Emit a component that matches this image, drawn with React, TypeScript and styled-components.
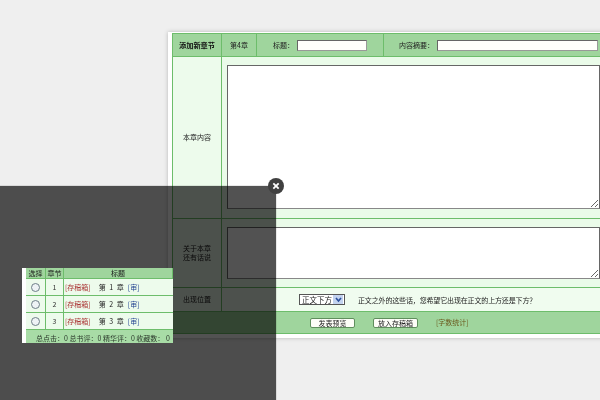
import React from "react";
import styled, { createGlobalStyle } from "styled-components";

const rows = [1, 2, 3];

const App = () => {
  return (
    <Page>
      <GlobalStyle />
      <Panel>
        <HeadRow>
          <HeadTitle>添加新章节</HeadTitle>
          <HeadCell>第4章</HeadCell>
          <HeadField>
            标题：
            <TitleInput />
          </HeadField>
          <HeadField $wide>
            内容摘要：
            <SummaryInput />
          </HeadField>
        </HeadRow>
        <BodyRow>
          <RowLabel>本章内容</RowLabel>
          <AreaCell $top={8} $bottom={9}>
            <MainArea />
          </AreaCell>
        </BodyRow>
        <BodyRow>
          <RowLabel>
            关于本章
            <br />
            还有话说
          </RowLabel>
          <AreaCell $top={8} $bottom={8}>
            <NoteArea />
          </AreaCell>
        </BodyRow>
        <PositionRow>
          <RowLabel>出现位置</RowLabel>
          <PositionCell>
            <SelectBox>
              <span>正文下方</span>
              <SelectArrow>
                <svg width="9" height="9" viewBox="0 0 9 9">
                  <path d="M2 3 L4.5 6 L7 3" fill="none" stroke="#2a4f9c" strokeWidth="1.6" />
                </svg>
              </SelectArrow>
            </SelectBox>
            正文之外的这些话，您希望它出现在正文的上方还是下方？
          </PositionCell>
        </PositionRow>
        <FootRow>
          <FootButton>发表预览</FootButton>
          <FootButton>放入存稿箱</FootButton>
          <CountLink>[字数统计]</CountLink>
        </FootRow>
      </Panel>

      <Overlay>
        <CloseButton>
          <svg width="8" height="8" viewBox="0 0 9 9">
            <path d="M1.5 1.5 L7.5 7.5 M7.5 1.5 L1.5 7.5" stroke="#fff" strokeWidth="2" />
          </svg>
        </CloseButton>
        <Popup>
          <PopupHead>
            <PopupHeadCell>选择</PopupHeadCell>
            <PopupHeadCell>章节</PopupHeadCell>
            <PopupHeadCell>标题</PopupHeadCell>
          </PopupHead>
          {rows.map((n) => (
            <PopupRow key={n}>
              <PopupCell>
                <Radio type="radio" name="chapter" />
              </PopupCell>
              <PopupCell>{n}</PopupCell>
              <TitleCell>
                <Draft>[存稿箱]</Draft>
                <ChapterName>第 {n} 章</ChapterName>
                <Review>[审]</Review>
              </TitleCell>
            </PopupRow>
          ))}
          <PopupFoot>总点击：0 总书评：0 精华评：0 收藏数： 0</PopupFoot>
        </Popup>
      </Overlay>
    </Page>
  );
};

export default App;

const GlobalStyle = createGlobalStyle`
  html, body {
    margin: 0;
    padding: 0;
    overflow: hidden;
    background: #efefef;
  }
`;

const Page = styled.div`
  position: relative;
  width: 600px;
  height: 400px;
  overflow: hidden;
  box-sizing: border-box;
  padding: 32px 0 0 168px;
  background: #efefef;
  font-family: "Noto Sans CJK SC", "Liberation Sans", sans-serif;
  font-size: 7px;
  color: #222;
  filter: blur(0.3px);
`;

const Panel = styled.div`
  width: 440px;
  height: 306px;
  box-sizing: border-box;
  padding: 1px 0 0 4px;
  background: #fff;
  box-shadow: 0 0 4px #b5b5b5;
`;

const HeadRow = styled.div`
  display: grid;
  grid-template-columns: 49px 35px 127px 1fr;
  height: 24px;
  background: #9fd59d;
  border-top: 1px solid #6dbd6b;
  border-left: 1px solid #6dbd6b;
  box-sizing: border-box;
`;

const HeadCell = styled.div`
  display: flex;
  align-items: center;
  justify-content: center;
  border-right: 1px solid #6dbd6b;
  border-bottom: 1px solid #6dbd6b;
`;

const HeadTitle = styled(HeadCell)`
  font-weight: 700;
  font-size: 7.2px;
  color: #111;
`;

const HeadField = styled(HeadCell)<{ $wide?: boolean }>`
  justify-content: flex-start;
  gap: 3px;
  padding-left: ${(p) => (p.$wide ? "15px" : "16px")};
`;

const TitleInput = styled.input`
  width: 70px;
  height: 11px;
  box-sizing: border-box;
  background: #fffffb;
  border: 1px solid;
  border-color: #666 #999 #999 #666;
  padding: 0;
`;

const SummaryInput = styled(TitleInput)`
  width: 161px;
`;

const BodyRow = styled.div`
  display: grid;
  grid-template-columns: 49px 1fr;
  background: #edfbec;
  border-left: 1px solid #6dbd6b;
  border-bottom: 1px solid #6dbd6b;
`;

const RowLabel = styled.div`
  display: flex;
  align-items: center;
  justify-content: center;
  text-align: center;
  line-height: 9px;
  border-right: 1px solid #6dbd6b;
`;

const AreaCell = styled.div<{ $top: number; $bottom: number }>`
  display: flex;
  padding: ${(p) => p.$top}px 0 ${(p) => p.$bottom}px 5px;
  background: #eafbe9;
`;

const MainArea = styled.textarea`
  display: block;
  width: 373px;
  height: 144px;
  box-sizing: border-box;
  background: #fff;
  border: 1px solid #666;
  border-bottom-color: #888;
  padding: 0;
  margin: 0;
`;

const NoteArea = styled(MainArea)`
  height: 52px;
`;

const PositionRow = styled(BodyRow)`
  height: 24px;
  box-sizing: border-box;
`;

const PositionCell = styled.div`
  display: flex;
  align-items: center;
  gap: 13px;
  padding-left: 77px;
  letter-spacing: -0.15px;
  color: #222;
  background: #f0fcef;
`;

const SelectBox = styled.div`
  display: flex;
  align-items: center;
  justify-content: space-between;
  width: 46px;
  height: 11px;
  box-sizing: border-box;
  padding: 0 1px 0 2px;
  background: #fff;
  border: 1px solid #555;
  font-size: 7.5px;
  letter-spacing: 0;
`;

const SelectArrow = styled.div`
  display: flex;
  align-items: center;
  justify-content: center;
  width: 10px;
  height: 9px;
  background: #c3d3ef;
`;

const FootRow = styled.div`
  display: flex;
  align-items: center;
  height: 21px;
  padding-left: 137px;
  background: #9fd59d;
  border-left: 1px solid #6dbd6b;
  border-bottom: 1px solid #6dbd6b;
`;

const FootButton = styled.button`
  width: 45px;
  height: 10px;
  margin-right: 18px;
  padding: 0;
  background: #fdfdf8;
  border: 1px solid #5f8f5d;
  border-radius: 2px;
  font-family: inherit;
  font-size: 7px;
  line-height: 8px;
  color: #222;
`;

const CountLink = styled.span`
  font-size: 7px;
  color: #6b5a1e;
  margin-bottom: 2px;
`;

const Overlay = styled.div`
  position: absolute;
  left: 0;
  top: 186px;
  width: 276px;
  height: 214px;
  box-sizing: border-box;
  padding: 82px 0 0 22px;
  background: rgba(0, 0, 0, 0.68);
  box-shadow: 0 0 1px rgba(0, 0, 0, 0.5);
`;

const CloseButton = styled.div`
  position: absolute;
  top: -8px;
  right: -8px;
  display: flex;
  align-items: center;
  justify-content: center;
  width: 16px;
  height: 16px;
  border-radius: 50%;
  background: #404040;
`;

const Popup = styled.div`
  width: 151px;
  height: 75px;
  box-sizing: border-box;
  padding-left: 4px;
  background: #fff;
  overflow: hidden;
`;

const PopupHead = styled.div`
  display: grid;
  grid-template-columns: 20px 18px 1fr;
  height: 10px;
  background: #9fd59d;
`;

const PopupHeadCell = styled.div`
  display: flex;
  align-items: center;
  justify-content: center;
  border-right: 1px solid #6dbd6b;
  color: #1a1a1a;
`;

const PopupRow = styled.div`
  display: grid;
  grid-template-columns: 20px 18px 1fr;
  height: 17px;
  box-sizing: border-box;
  background: #edfbec;
  border-top: 1px solid #6dbd6b;
`;

const PopupCell = styled.div`
  display: flex;
  align-items: center;
  justify-content: center;
  border-right: 1px solid #6dbd6b;
  color: #333;
`;

const TitleCell = styled.div`
  display: flex;
  align-items: center;
  padding-left: 1px;
  white-space: nowrap;
`;

const Draft = styled.span`
  color: #a33;
`;

const ChapterName = styled.span`
  margin: 0 4px 0 8px;
  word-spacing: 2px;
`;

const Review = styled.span`
  color: #1f3f8f;
`;

const Radio = styled.input`
  appearance: none;
  width: 9px;
  height: 9px;
  margin: 0;
  border: 1px solid #6f7f88;
  border-radius: 50%;
  background: #eef3f5;
`;

const PopupFoot = styled.div`
  display: flex;
  align-items: center;
  height: 15px;
  width: 160px;
  padding-left: 10px;
  background: #a8dca6;
  border-top: 1px solid #6dbd6b;
  white-space: pre;
  color: #2c3a2c;
`;
